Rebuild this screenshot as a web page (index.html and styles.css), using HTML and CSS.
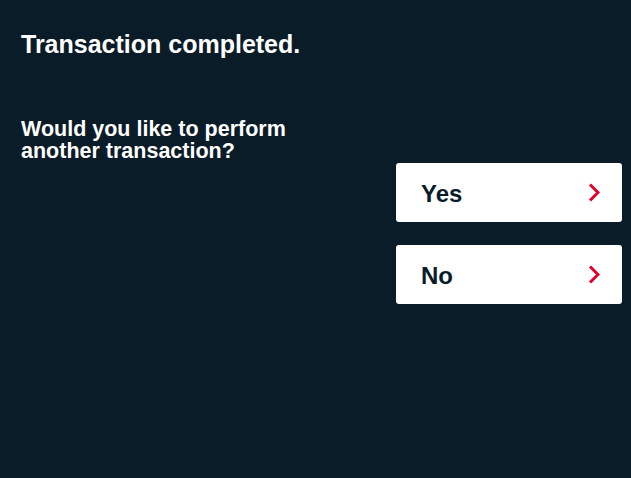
FILE: index.html
```html
<!DOCTYPE html>
<html lang="en">
<head>
<meta charset="utf-8">
<title>Transaction completed</title>
<link rel="stylesheet" href="styles.css">
</head>
<body>
<main class="screen">
  <h1 class="title">Transaction completed.</h1>
  <p class="question">Would you like to perform<br>another transaction?</p>
  <div class="options">
    <button class="option" type="button">
      <span class="option-label">Yes</span>
      <svg class="chevron" viewBox="0 0 12 19" width="12" height="19" aria-hidden="true"><path d="M2 1.5 L10 9.5 L2 17.5" fill="none" stroke="#e4002b" stroke-width="3"/></svg>
    </button>
    <button class="option" type="button">
      <span class="option-label">No</span>
      <svg class="chevron" viewBox="0 0 12 19" width="12" height="19" aria-hidden="true"><path d="M2 1.5 L10 9.5 L2 17.5" fill="none" stroke="#e4002b" stroke-width="3"/></svg>
    </button>
  </div>
</main>
</body>
</html>
```

FILE: styles.css
```css
html, body {
  margin: 0;
  padding: 0;
  background: #0b1c29;
  height: 100%;
}
body {
  font-family: "Liberation Sans", Arial, sans-serif;
  color: #ffffff;
}
.screen {
  display: flex;
  flex-direction: column;
  padding: 29px 9px 0 21px;
}
.title {
  margin: 0;
  font-size: 25px;
  line-height: 30px;
  font-weight: 700;
}
.question {
  margin: 59px 0 0 0;
  font-size: 21.5px;
  line-height: 22px;
  font-weight: 700;
}
.options {
  display: flex;
  flex-direction: column;
  align-items: flex-end;
  gap: 23px;
  margin-top: 1px;
}
.option {
  display: flex;
  align-items: center;
  justify-content: space-between;
  width: 226px;
  height: 59px;
  box-sizing: border-box;
  padding: 0 22px 0 25px;
  border: 0;
  border-radius: 3px;
  background: #ffffff;
  color: #0b1c29;
  font-family: "Liberation Sans", Arial, sans-serif;
  font-size: 24px;
  font-weight: 700;
  cursor: pointer;
}
.option-label {
  padding-top: 2px;
}
.chevron {
  display: block;
}
```
